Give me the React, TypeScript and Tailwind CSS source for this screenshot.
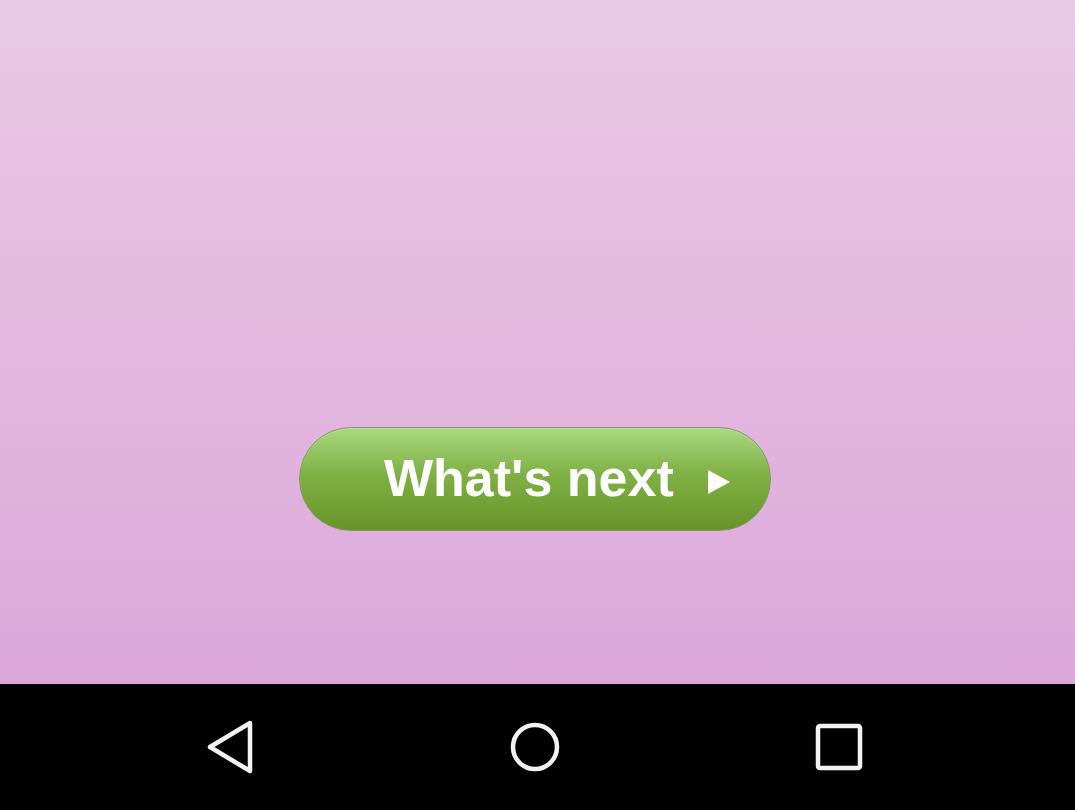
import React from 'react';

const App: React.FC = () => {
  return (
    <div className="w-[1075px] h-[810px] flex flex-col overflow-hidden" style={{ fontFamily: '"Liberation Sans", Arial, sans-serif' }}>
      {/* content area */}
      <div className="h-[684px] bg-gradient-to-b from-[#eac9e7] to-[#dba8d9] flex justify-center items-start pt-[427px] pr-[5px]">
        <button className="w-[472px] h-[104px] rounded-full border border-[#7f9a5c] bg-gradient-to-b from-[#a9d880] via-[#80b144] via-45% to-[#67942a] flex items-center pl-[84px] shadow-[inset_0_1px_0_rgba(255,255,255,0.25)]">
          <span className="text-[52px] leading-none font-bold text-white pb-[2px]">What's next</span>
          <svg className="ml-[33px] mt-[6px]" width="24" height="26" viewBox="0 0 24 26">
            <path d="M1 1 L23 13 L1 25 Z" fill="#ffffff" />
          </svg>
        </button>
      </div>

      {/* navigation bar */}
      <div className="h-[126px] bg-black flex items-center justify-center pr-[5px]">
        <div className="w-[304px] flex justify-center">
          <svg width="50" height="56" viewBox="0 0 50 56">
            <path d="M44 4 L4 28 L44 52 Z" fill="none" stroke="#f2f2f2" strokeWidth="4.5" strokeLinejoin="round" />
          </svg>
        </div>
        <div className="w-[304px] flex justify-center">
          <svg width="52" height="52" viewBox="0 0 52 52">
            <circle cx="26" cy="26" r="22" fill="none" stroke="#f2f2f2" strokeWidth="4.5" />
          </svg>
        </div>
        <div className="w-[304px] flex justify-center">
          <svg width="48" height="48" viewBox="0 0 48 48">
            <rect x="3" y="3" width="42" height="42" rx="2" fill="none" stroke="#f2f2f2" strokeWidth="4.5" />
          </svg>
        </div>
      </div>
    </div>
  );
};

export default App;
